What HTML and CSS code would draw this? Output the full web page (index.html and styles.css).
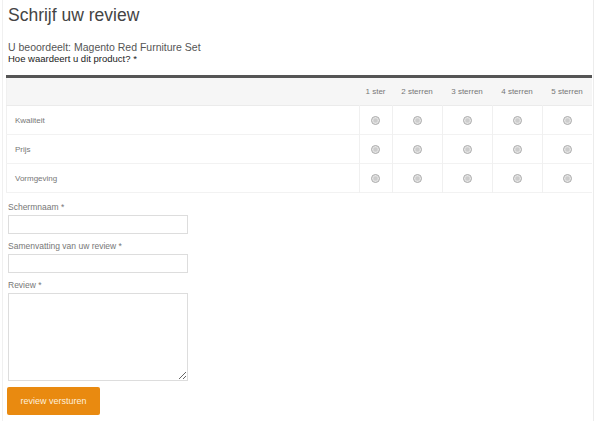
FILE: index.html
```html
<!DOCTYPE html>
<html lang="nl">
<head>
    <meta charset="UTF-8">
    <title>Schrijf uw review</title>
    <link rel="stylesheet" href="styles.css">
</head>
<body>
    <div class="pagina">
        <h1>Schrijf uw review</h1>
        <p class="beoordeelt">U beoordeelt: Magento Red Furniture Set</p>
        <p class="vraag">Hoe waardeert u dit product? *</p>

        <table class="sterren">
            <thead>
                <tr>
                    <th class="label"></th>
                    <th class="ster1">1 ster</th>
                    <th>2 sterren</th>
                    <th>3 sterren</th>
                    <th>4 sterren</th>
                    <th>5 sterren</th>
                </tr>
            </thead>
            <tbody>
                <tr>
                    <td class="label">Kwaliteit</td>
                    <td><span class="radio"></span></td>
                    <td><span class="radio"></span></td>
                    <td><span class="radio"></span></td>
                    <td><span class="radio"></span></td>
                    <td><span class="radio"></span></td>
                </tr>
                <tr>
                    <td class="label">Prijs</td>
                    <td><span class="radio"></span></td>
                    <td><span class="radio"></span></td>
                    <td><span class="radio"></span></td>
                    <td><span class="radio"></span></td>
                    <td><span class="radio"></span></td>
                </tr>
                <tr>
                    <td class="label">Vormgeving</td>
                    <td><span class="radio"></span></td>
                    <td><span class="radio"></span></td>
                    <td><span class="radio"></span></td>
                    <td><span class="radio"></span></td>
                    <td><span class="radio"></span></td>
                </tr>
            </tbody>
        </table>

        <form class="formulier">
            <label>Schermnaam *</label>
            <input type="text">
            <label>Samenvatting van uw review *</label>
            <input type="text">
            <label>Review *</label>
            <textarea></textarea>
            <button type="button">review versturen</button>
        </form>
    </div>
</body>
</html>
```

FILE: styles.css
```css
body {
    margin: 0;
    font-family: "Liberation Sans", Arial, sans-serif;
    background-color: white;
    color: #555;
}
.pagina {
    margin-left: 2px;
    width: 592px;
    height: 421px;
    border-left: 1px solid #f0f0f0;
    border-right: 1px solid #ececec;
    box-sizing: border-box;
    padding: 0 0 0 4px;
}
h1 {
    margin: 0;
    padding: 4px 0 0 1px;
    font-size: 17.5px;
    font-weight: normal;
    color: #444;
    line-height: 22px;
}
.beoordeelt {
    margin: 16px 0 0 1px;
    font-size: 10.5px;
    line-height: 11px;
    color: #555;
}
.vraag {
    margin: 0 0 0 1px;
    font-size: 9.5px;
    line-height: 11px;
    color: #222;
}
.sterren {
    margin: 11px 0 0 -1px;
    width: 586px;
    border-collapse: collapse;
    border-top: 3px solid #555;
    border-left: 1px solid #f0f0f0;
    border-bottom: 1px solid #e8e8e8;
    font-size: 8px;
    color: #777;
}
.sterren thead tr {
    background-color: #f6f6f6;
    height: 29px;
    border-bottom: 1px solid #ebebeb;
}
.sterren th {
    font-weight: normal;
    width: 50px;
    padding: 0;
    text-align: center;
}
.sterren th.ster1 {
    width: 33px;
}
.sterren th.label {
    width: auto;
}
.sterren tbody tr {
    height: 29px;
    border-bottom: 1px solid #f2f2f2;
}
.sterren td {
    text-align: center;
    border-left: 1px solid #f0f0f0;
    padding: 0;
}
.sterren td.label {
    text-align: left;
    padding-left: 8px;
    border-left: none;
}
.radio {
    display: inline-block;
    width: 7px;
    height: 7px;
    border: 1px solid #aaa;
    border-radius: 50%;
    background: radial-gradient(circle, #ccc 30%, #eee 70%);
    vertical-align: middle;
}
.formulier {
    display: flex;
    flex-direction: column;
    align-items: flex-start;
    padding-top: 9px;
    padding-left: 1px;
}
.formulier label {
    font-size: 8.5px;
    line-height: 10px;
    color: #777;
    margin-bottom: 3px;
}
.formulier input {
    width: 180px;
    height: 19px;
    box-sizing: border-box;
    border: 1px solid #ddd;
    margin: 0 0 7px 0;
}
.formulier textarea {
    width: 180px;
    height: 88px;
    box-sizing: border-box;
    border: 1px solid #ddd;
    margin: 0;
    resize: both;
}
button {
    margin-top: 6px;
    margin-left: -1px;
    width: 93px;
    height: 28px;
    border: none;
    border-radius: 2px;
    background-color: #e98a10;
    color: #fdf0dc;
    font-family: "Liberation Sans", Arial, sans-serif;
    font-size: 9px;
    cursor: pointer;
}
```
